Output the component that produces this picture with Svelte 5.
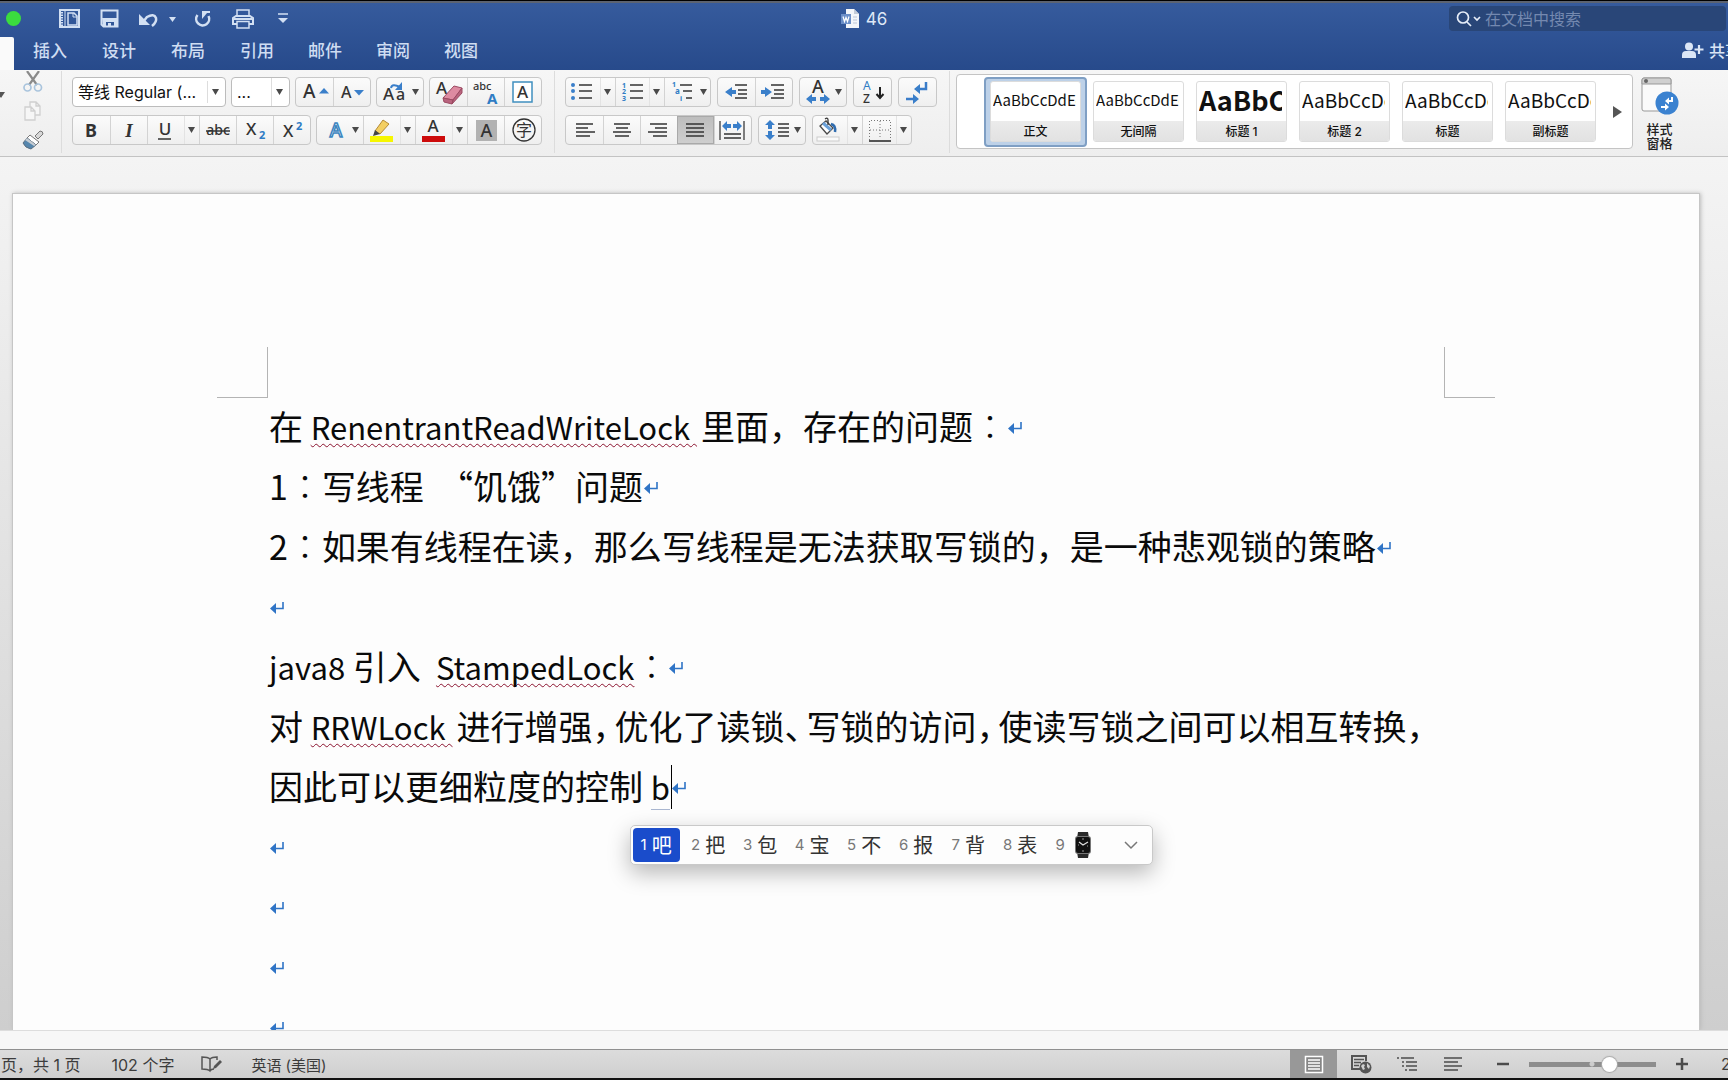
<script>
  const tabs = ['插入', '设计', '布局', '引用', '邮件', '审阅', '视图'];

  const fontRow2 = [
    [
      { icon: 'bold', label: '加粗' },
      { icon: 'italic', label: '倾斜' },
      { icon: 'underline', label: '下划线', split: true },
      { icon: 'strike', label: '删除线' },
      { icon: 'sub', label: '下标' },
      { icon: 'sup', label: '上标' }
    ],
    [
      { icon: 'effect', label: '文本效果', wide: true },
      { icon: 'highlight', label: '突出显示', split: true },
      { icon: 'color', label: '字体颜色', split: true },
      { icon: 'shade', label: '字符底纹' },
      { icon: 'circled', label: '带圈字符' }
    ]
  ];
  const fontRow1 = [
    [
      { icon: 'grow', label: '增大字号' },
      { icon: 'shrink', label: '减小字号' }
    ],
    [{ icon: 'case', label: '更改大小写', wide: true }],
    [
      { icon: 'clear', label: '清除格式' },
      { icon: 'phonetic', label: '拼音指南' },
      { icon: 'charborder', label: '字符边框' }
    ]
  ];
  const paraRow1 = [
    [
      { icon: 'bullets', label: '项目符号', split: true, narrow: true },
      { icon: 'numbers', label: '编号', split: true, narrow: true },
      { icon: 'multilevel', label: '多级列表', wide: true }
    ],
    [
      { icon: 'outdent', label: '减少缩进量' },
      { icon: 'indent', label: '增加缩进量' }
    ],
    [{ icon: 'asian', label: '中文版式', wide: true }],
    [{ icon: 'sort', label: '排序' }],
    [{ icon: 'marks', label: '显示编辑标记' }]
  ];
  const paraRow2 = [
    [
      { icon: 'left', label: '左对齐' },
      { icon: 'center', label: '居中' },
      { icon: 'right', label: '右对齐' },
      { icon: 'justify', label: '两端对齐', on: true },
      { icon: 'distribute', label: '分散对齐' }
    ],
    [{ icon: 'spacing', label: '行距', wide: true }],
    [
      { icon: 'fill', label: '底纹', split: true, narrow: true },
      { icon: 'borders', label: '边框', split: true, narrow: true }
    ]
  ];

  const styles = [
    { name: '正文', sample: 'AaBbCcDdEe', kind: 'small', on: true },
    { name: '无间隔', sample: 'AaBbCcDdEe', kind: 'small' },
    { name: '标题 1', sample: 'AaBbC', kind: 'heavy' },
    { name: '标题 2', sample: 'AaBbCcDc', kind: 'large' },
    { name: '标题', sample: 'AaBbCcDc', kind: 'large' },
    { name: '副标题', sample: 'AaBbCcDc', kind: 'large' }
  ];

  const candidates = ['吧', '把', '包', '宝', '不', '报', '背', '表'];
  const aligned = {
    left: [[10, 27], [10, 22], [10, 29], [10, 24]],
    center: [[11, 27], [13, 25], [10, 28], [12, 26]],
    right: [[10, 27], [15, 27], [8, 27], [13, 27]],
    justify: [[9, 27], [9, 27], [9, 27], [9, 27]]
  };
  const rowY = [8, 12, 16, 20];
  let zoom = $state(65);
  let query = $state('');
</script>

{#snippet caret(x, y)}
  <path class="caret" d="M{x - 3} {y - 3}h7l-3.5 6z" />
{/snippet}

{#snippet mark()}
  <svg class="mark" width="14" height="12" viewBox="0 0 14 12" aria-hidden="true">
    <path d="M0 6.5 6 1v11z" fill="#2f74c6" />
    <path d="M5 6.5h8V0" fill="none" stroke="#2f74c6" stroke-width="1.6" />
  </svg>
{/snippet}

{#snippet icon(name, wide, narrow)}
  <svg width={wide ? 46 : narrow ? 34 : 37} height="28" viewBox="0 0 {wide ? 46 : narrow ? 34 : 37} 28" aria-hidden="true">
    {#if name === 'grow'}
      <text x="7" y="20" font-size="19">A</text><path class="blue" d="M23 15.5h10l-5-5.5z" />
    {:else if name === 'shrink'}
      <text x="8" y="20" font-size="16">A</text><path class="blue" d="M21 12h10l-5 5.5z" />
    {:else if name === 'case'}
      <text x="6" y="22" font-size="17">A</text><text x="19" y="22" font-size="16">a</text>
      <path class="bline" d="M14 10q1-5 9 -1" /><path class="blue" d="M25 4v8h-7z" />
      {@render caret(38, 14)}
    {:else if name === 'clear'}
      <text x="6" y="16" font-size="17">A</text>
      <path d="m13 20 11-12 8 2-9 12z" fill="#dd8ba1" stroke="#9b4a62" stroke-width="1" />
      <path d="m13 20 10 2-1 4-8-2zM23 22l9-12v5L22 26z" fill="#b9647e" stroke="#9b4a62" stroke-width="1" />
    {:else if name === 'phonetic'}
      <text x="6" y="12" font-size="11">abc</text><text class="btext" x="20" y="26" font-size="15">A</text>
    {:else if name === 'charborder'}
      <rect x="9" y="4" width="19" height="20" fill="#fff" stroke="#3f8fbf" stroke-width="1.5" />
      <text class="mid" x="18.5" y="20" font-size="17">A</text>
    {:else if name === 'bold'}
      <text class="mid heavy" x="18" y="21" font-size="18">B</text>
    {:else if name === 'italic'}
      <text class="mid serif" x="19" y="21" font-size="19">I</text>
    {:else if name === 'underline'}
      <text class="mid" x="18" y="19" font-size="17">U</text><path class="ink" d="M11 23h13" />
    {:else if name === 'strike'}
      <text class="mid" x="19" y="19" font-size="14">abc</text><path class="ink" d="M7 15h24" />
    {:else if name === 'sub'}
      <text x="10" y="19" font-size="17">X</text><text class="btext" x="23" y="23" font-size="11">2</text>
    {:else if name === 'sup'}
      <text x="10" y="21" font-size="17">X</text><text class="btext" x="23" y="14" font-size="11">2</text>
    {:else if name === 'effect'}
      <text class="mid glow" x="19" y="21" font-size="19">A</text>{@render caret(38, 14)}
    {:else if name === 'highlight'}
      <path d="m20 4 6 4-9 10-5-3z" fill="#f3cf63" stroke="#b48a35" /><path d="m12 14 5 4-7 2z" fill="#444" />
      <rect x="7" y="20" width="23" height="6" fill="#f6f600" />
    {:else if name === 'color'}
      <text class="mid" x="18" y="16" font-size="17">A</text><rect x="7" y="20" width="23" height="6" fill="#cd0b0b" />
    {:else if name === 'shade'}
      <rect x="9" y="4" width="21" height="21" fill="#b2b2b2" /><text class="mid" x="19.5" y="21" font-size="18">A</text>
    {:else if name === 'circled'}
      <circle cx="20" cy="14" r="11" fill="none" stroke="#333" stroke-width="1.3" />
      <text class="mid cjk" x="20" y="20" font-size="16">字</text>
    {:else if name === 'bullets'}
      {#each [7, 13, 20] as y}<circle class="blue" cx="7" cy={y} r="2" /><path class="ink" d="M13 {y}h13" />{/each}
    {:else if name === 'numbers'}
      {#each [7, 13, 20] as y, i}<text class="btext" x="7" y={y + 3} font-size="7">{i + 1}</text><path class="ink" d="M15 {y}h13" />{/each}
    {:else if name === 'multilevel'}
      <text class="btext" x="8" y="9" font-size="7">1</text><text class="btext" x="11" y="16" font-size="8">a</text><text class="btext" x="16" y="23" font-size="7">i</text>
      <path class="ink" d="M16 7h12M19 13h9M22 20h6" />{@render caret(39, 14)}
    {:else if name === 'outdent'}
      <path class="blue" d="m7 14 7-5v3h4v4h-4v3z" /><path class="ink" d="M17 7h12M20 12h9M20 16h9M17 20h12" />
    {:else if name === 'indent'}
      <path class="blue" d="m17 14-7-5v3H6v4h4v3z" /><path class="ink" d="M16 7h13M19 12h10M19 16h10M16 20h13" />
    {:else if name === 'asian'}
      <text class="mid" x="18" y="15" font-size="18">A</text>
      <path class="blue" d="m6 21 6-5v3h4v4h-4v3zM30 21l-6-5v3h-4v4h4v3z" />{@render caret(38, 14)}
    {:else if name === 'sort'}
      <text class="btext light" x="9" y="12" font-size="12">A</text><text x="9" y="25" font-size="12">Z</text>
      <path d="M26 9v10M22.500 16l3.500 4 3.500-4" fill="none" stroke="#222" stroke-width="2" />
    {:else if name === 'marks'}
      <path d="M27 4v7h-7M7 21h7" fill="none" stroke="#3a7cc9" stroke-width="2.500" /><path class="blue" d="m15 11 6-5v10zM20 21l-6-5v10z" />
    {:else if aligned[name]}
      {#each aligned[name] as [a, b], i}<path class="ink" d="M{a} {rowY[i]}H{b}" />{/each}
    {:else if name === 'distribute'}
      <path d="M6 5v19M30 5v19" stroke="#555" stroke-width="1.500" /><path class="ink" d="M10 18h17M10 22h17" />
      <path class="blue" d="m8 10 5-5v3h4v4h-4v3zM28 10l-5-5v3h-4v4h4v3z" />
    {:else if name === 'spacing'}
      <path class="blue" d="m11 4 5 5h-3v4H9V9H6zM11 24l5-5h-3v-4H9v4H6z" /><path class="ink" d="M19 8h11M19 12h11M19 16h11M19 20h11" />
      {@render caret(38, 14)}
    {:else if name === 'fill'}
      <path d="m7 10 6-5 7 7-6 6z" fill="#fff" stroke="#4a4a4a" stroke-width="1.300" /><path d="m10 7 8 7" stroke="#6aa0d8" stroke-width="3" />
      <path d="M15 9V4q0-3-3-1" fill="none" stroke="#333" stroke-width="1.300" /><path d="M18 8q5 1 4 8" fill="none" stroke="#2f6cb0" stroke-width="2.500" />
      <rect x="4" y="21" width="22" height="4" fill="#fafafa" stroke="#ccc" />
    {:else if name === 'borders'}
      <path d="M7.500 24V4.500h21V24M18 5v18M8 14h20" fill="none" stroke="#777" stroke-width="1" stroke-dasharray="1 2" /><path d="M7 25h22" stroke="#222" stroke-width="1.500" />
    {/if}
  </svg>
{/snippet}

{#snippet row(groups)}
  {#each groups as group}
    <div class="group">
      {#each group as b}
        <button class="tool" class:on={b.on} aria-label={b.label}>{@render icon(b.icon, b.wide, b.narrow)}</button>
        {#if b.split}
          <button class="drop" aria-label="{b.label}选项">
            <svg width="15" height="28" viewBox="0 0 15 28" aria-hidden="true">{@render caret(7, 14)}</svg>
          </button>
        {/if}
      {/each}
    </div>
  {/each}
{/snippet}

<div class="app">
  <header>
    <div class="titlebar">
      <div class="quick">
        <button class="green" aria-label="缩放窗口"></button>
        <button class="q first" aria-label="边栏">
          <svg width="21" height="19" viewBox="0 0 21 19"><path d="M1 1h19v17H1z" fill="none" stroke="#d3e0f3" stroke-width="2" /><path d="M3 3v14" stroke="#d3e0f3" stroke-width="2" stroke-dasharray="1.500 1" /><path d="M6 1v17" stroke="#d3e0f3" stroke-width="1" /><path d="M9 4h6l3 3v9H9z" fill="none" stroke="#d3e0f3" stroke-width="1.500" /><path d="M14 4v4h4" fill="none" stroke="#d3e0f3" /></svg>
        </button>
        <button class="q save" aria-label="保存">
          <svg width="19" height="19" viewBox="0 0 19 19"><path d="M1.500 1.500h16v16h-14l-2-2z" fill="none" stroke="#d3e0f3" stroke-width="2" /><path d="M2 9h15v9h-3v-5H6v5H3z" fill="#d3e0f3" /><path d="M8 14h3v4H8z" fill="#d3e0f3" /></svg>
        </button>
        <button class="q undo" aria-label="撤销">
          <svg width="38" height="18" viewBox="0 0 38 18"><path d="M5 12 9 7q7-4 9 1 1 4-4 8" fill="none" stroke="#d3e0f3" stroke-width="2.500" /><path d="M1 4v11h11z" fill="#d3e0f3" /><path d="M31 7h7l-3.500 5z" fill="#d3e0f3" /></svg>
        </button>
        <button class="q redo" aria-label="重做">
          <svg width="18" height="18" viewBox="0 0 18 18"><path d="M3.500 5a6.500 6.500 0 1 0 11 1" fill="none" stroke="#d3e0f3" stroke-width="2.500" /><path d="M8 1h8v2h-3l-5 6z" fill="#d3e0f3" /></svg>
        </button>
        <button class="q print" aria-label="打印">
          <svg width="22" height="20" viewBox="0 0 22 20"><path d="M5 7V1h12v6" fill="none" stroke="#d3e0f3" stroke-width="1.500" /><path d="M5 15H1V9l3-2h14l3 2v6h-4" fill="none" stroke="#d3e0f3" stroke-width="2" /><path d="M2 9h18v2H2z" fill="#d3e0f3" /><path d="M5 12.500h12V19H5z" fill="none" stroke="#d3e0f3" stroke-width="1.500" /></svg>
        </button>
        <button class="q custom" aria-label="自定义">
          <svg width="10" height="11" viewBox="0 0 10 11"><path d="M0 1h10" stroke="#d3e0f3" stroke-width="1.500" /><path d="M0 5h10l-5 5z" fill="#d3e0f3" /></svg>
        </button>
      </div>
      <div class="title">
        <svg width="18" height="19" viewBox="0 0 18 19" aria-hidden="true"><path d="M5 0h8l5 5v14H5z" fill="#f4f6fa" /><path d="M13 0v5h5" fill="#c3cbd8" /><path d="M12 8h4M12 11h4M12 14h4" stroke="#bcc6d8" /><path d="M0 5h10v10H0z" fill="#6c8fc8" /><path d="m2 7.500 1.500 5L5 8.500l1.500 4 1.500-5" fill="none" stroke="#fff" stroke-width="1.200" /></svg>
        <span>46</span>
      </div>
      <label class="search">
        <svg width="26" height="18" viewBox="0 0 26 18" aria-hidden="true"><circle cx="7" cy="7.500" r="5.500" fill="none" stroke="#e6edf8" stroke-width="1.700" /><path d="m11 12 4 4M18 7l3 3 3-3" fill="none" stroke="#e6edf8" stroke-width="1.700" /></svg>
        <input type="text" placeholder="在文档中搜索" aria-label="在文档中搜索" bind:value={query} />
      </label>
    </div>
    <nav>
      <span class="active"></span>
      {#each tabs as t}<button class="tab">{t}</button>{/each}
      <button class="share">
        <svg width="22" height="17" viewBox="0 0 22 17" aria-hidden="true"><circle cx="7" cy="4.500" r="4" fill="#dbe6f6" /><path d="M0 16V13q0-4 4-4h6q4 0 4 4v3z" fill="#dbe6f6" /><path d="M17 3v9M12.500 7.500h9" stroke="#dbe6f6" stroke-width="2.200" /></svg>
        <span>共享</span>
      </button>
    </nav>
  </header>

  <section class="ribbon" aria-label="功能区">
    <div class="clip">
      <button class="paste" aria-label="粘贴选项"><svg width="5" height="8" viewBox="0 0 5 8"><path d="M-3 1h8L1 7z" fill="#555" /></svg></button>
      <div class="clipcol">
        <button aria-label="剪切"><svg width="20" height="21" viewBox="0 0 20 21"><path d="m4 0 10 14M16 0 6 14" stroke="#8a8a8a" stroke-width="2.200" /><circle cx="4.500" cy="16.500" r="3.500" fill="none" stroke="#a9c4dd" stroke-width="1.700" /><circle cx="15" cy="16.500" r="3.500" fill="none" stroke="#a9c4dd" stroke-width="1.700" /></svg></button>
        <button aria-label="复制"><svg width="20" height="20" viewBox="0 0 20 20"><path d="M7 1h6l4 4v9H7zM13 1v4h4" fill="#f6f6f6" stroke="#cfcfcf" stroke-width="1.300" /><path d="M2 6h6l4 4v9H2zM8 6v4h4" fill="#f6f6f6" stroke="#cfcfcf" stroke-width="1.300" /></svg></button>
        <button aria-label="格式刷"><svg width="22" height="20" viewBox="0 0 22 20"><path d="m13 6 5-5q3 0 3 3l-5 5z" fill="#d8d8d8" stroke="#777" /><path d="m8 5 9 7-3 3-9-7z" fill="#fff" stroke="#777" /><path d="m5 8 9 7-5 4q-6-1-8-6z" fill="#5686ad" stroke="#5c6f80" /><path d="m5 8 9 7-2 1-9-6z" fill="#c6ccd2" /></svg></button>
      </div>
    </div>
    <div class="rows">
      <div class="row">
        <label class="pick font">
          <select aria-label="字体"><option>等线 Regular (...</option></select>
          <svg width="18" height="28" viewBox="0 0 18 28" aria-hidden="true"><path d="M.5 3v22" stroke="#ddd" />{@render caret(8, 14)}</svg>
        </label>
        <label class="pick size">
          <select aria-label="字号"><option>...</option></select>
          <svg width="18" height="28" viewBox="0 0 18 28" aria-hidden="true"><path d="M.5 0v28" stroke="#ddd" />{@render caret(8, 14)}</svg>
        </label>
        {@render row(fontRow1)}
      </div>
      <div class="row">{@render row(fontRow2)}</div>
    </div>
    <div class="rows para">
      <div class="row">{@render row(paraRow1)}</div>
      <div class="row">{@render row(paraRow2)}</div>
    </div>
    <div class="stylebox">
      <div class="gallery">
        {#each styles as s}
          <button class="style" class:chosen={s.on}>
            <span class="card">
              <span class="sample {s.kind}">{s.sample}</span>
              <span class="name">{s.name}</span>
            </span>
          </button>
        {/each}
        <button class="more" aria-label="更多样式"><svg width="9" height="12" viewBox="0 0 9 12"><path d="M0 0l9 6-9 6z" fill="#555" /></svg></button>
      </div>
      <button class="pane">
        <svg width="38" height="38" viewBox="0 0 38 38" aria-hidden="true"><rect x="1" y="1" width="29" height="33" rx="2" fill="#fafafa" stroke="#999" /><path d="M1 7V3q0-2 2-2h25q2 0 2 2v4z" fill="#d0d0d0" stroke="#999" /><circle cx="5" cy="4" r="2" fill="#666" /><circle cx="26" cy="26" r="11.500" fill="#3b82d0" /><path d="M31 20v4h-4M20 30h4" fill="none" stroke="#fff" stroke-width="2" /><path d="m24 24 4-3.500v7zM28 30l-4-3.500v7z" fill="#fff" /></svg>
        <span>样式<br />窗格</span>
      </button>
    </div>
  </section>

  <main>
    <article class="page">
      <div class="corners"><span class="corner l"></span><span class="corner r"></span></div>
      <div class="text">
        <p>在 <u class="gap">RenentrantReadWriteLock&nbsp;</u>里面，存在的问题<i>：</i>{@render mark()}</p>
        <p>1<i>：</i>写线程&nbsp; “饥饿”问题{@render mark()}</p>
        <p>2<i>：</i>如果有线程在读，那么写线程是无法获取写锁的，是一种悲观锁的策略{@render mark()}</p>
        <p>{@render mark()}</p>
        <p><span class="latin">java8</span> 引入&nbsp; <u>StampedLock</u><i>：</i>{@render mark()}</p>
        <p>对 <u class="gap">RRWLock&nbsp;</u>进行增强<b>，</b>优化了读锁<b>、</b>写锁的访问<b>，</b>使读写锁之间可以相互转换<b>，</b></p>
        <p>
          因此可以更细粒度的控制
          <span class="typing"><span class="comp">b</span><span class="cursor"></span>
            <span class="ime" role="listbox" aria-label="候选字">
              {#each candidates as c, i}
                <button class="cand" class:sel={i === 0} role="option" aria-selected={i === 0}><small>{i + 1}</small>{c}</button>
              {/each}
              <button class="cand emoji" role="option" aria-selected="false" aria-label="9 手表"><small>9</small>
                <svg width="18" height="26" viewBox="0 0 18 26"><path d="M4 0h10l1 6H3zM3 20h12l-1 6H4z" fill="#2a2a2a" /><rect x="1" y="4" width="16" height="18" rx="3" fill="#777" /><rect x="2" y="5" width="14" height="16" rx="2" fill="#111" /><path d="m5 10 4 3 5-3" fill="none" stroke="#ddd" stroke-width="1.300" /><path d="M9 6v2M9 18v2M4 13h1M13 14h1" stroke="#999" /></svg>
              </button>
              <button class="expand" aria-label="更多候选"><svg width="14" height="9" viewBox="0 0 14 9"><path d="m1 1 6 6 6-6" fill="none" stroke="#777" stroke-width="1.500" /></svg></button>
            </span>
          </span>{@render mark()}
        </p>
        <p>{@render mark()}</p>
        <p>{@render mark()}</p>
        <p>{@render mark()}</p>
        <p>{@render mark()}</p>
      </div>
    </article>
  </main>
  <div class="scroll"></div>

  <footer>
    <span class="pages">页，共 1 页</span>
    <span class="words">102 个字</span>
    <button class="proof" aria-label="校对"><svg width="22" height="18" viewBox="0 0 22 18"><path d="M9 16V4Q7 2 1 2v12q6 0 8 2 1-2 4-2M9 4q2-2 7-2v3" fill="none" stroke="#555" stroke-width="1.500" /><path d="m12 14 1-3 6-6 2 2-6 6z" fill="#555" /></svg></button>
    <button class="lang">英语 (美国)</button>
    <div class="views">
      <button class="view on" aria-label="页面视图"><svg width="20" height="19" viewBox="0 0 20 19"><rect x="1.500" y="1.500" width="17" height="16" fill="#858585" stroke="#fff" stroke-width="1.500" /><path d="M4 5h12M4 8h12M4 11h12M4 14h12" stroke="#fff" stroke-width="1.300" /></svg></button>
      <button class="view" aria-label="Web 版式"><svg width="22" height="20" viewBox="0 0 22 20"><path d="M10 15H2V2h14v5" fill="none" stroke="#555" stroke-width="2" /><path d="M4 5.500h10M4 8.500h7M4 11.500h5" stroke="#555" stroke-width="1.300" /><circle cx="15.500" cy="13.500" r="6" fill="#555" /><path d="m11 12 2-2 2 1-1 2 1 2-2 1zM17 9l3 3-1 3-2-2z" fill="#d0d0d0" /></svg></button>
      <button class="view" aria-label="大纲"><svg width="21" height="16" viewBox="0 0 21 16"><path d="M0 2h2M4 2h13M5 6h2M9 6h11M5 10h2M9 10h11M8 14h2M12 14h8" stroke="#4c4c4c" stroke-width="1.500" /></svg></button>
      <button class="view draft" aria-label="草稿"><svg width="20" height="16" viewBox="0 0 20 16"><path d="M1 2h18M1 6h14M1 10h18M1 14h14" stroke="#4c4c4c" stroke-width="1.500" /></svg></button>
    </div>
    <button class="step" aria-label="缩小"><svg width="12" height="12" viewBox="0 0 12 12"><path d="M0 6h12" stroke="#4c4c4c" stroke-width="2.500" /></svg></button>
    <input type="range" min="0" max="100" bind:value={zoom} aria-label="缩放" />
    <button class="step" aria-label="放大"><svg width="12" height="12" viewBox="0 0 12 12"><path d="M0 6h12M6 0v12" stroke="#4c4c4c" stroke-width="2.500" /></svg></button>
    <span class="percent">200%</span>
  </footer>
</div>

<style>
  :global(body) { margin: 0; overflow: hidden; }
  .app {
    display: flex; flex-direction: column; height: 100vh; box-sizing: border-box;
    border-top: 1px solid #000; border-bottom: 2px solid #111; overflow: hidden;
    font-family: Inter, "Noto Sans CJK SC", sans-serif; font-size: 15px; color: #333;
  }
  button { padding: 0; border: 0; background: none; font: inherit; color: inherit; display: flex; align-items: center; justify-content: center; flex: none; }
  svg { display: block; flex: none; }
  header { border-top: 2px solid #5c6370; background: linear-gradient(#365b9d, #274a8b); flex: none; }
  .titlebar { display: grid; grid-template-columns: 1fr auto 1fr; align-items: center; height: 31px; padding-bottom: 3px; }
  .quick { display: flex; align-items: center; }
  .green { width: 15px; height: 15px; border-radius: 50%; background: #3bdc3e; margin-left: 6px; }
  .first { margin-left: 38px; }
  .save { margin-left: 20px; }
  .undo { margin-left: 19px; }
  .redo { margin-left: 18px; }
  .print { margin-left: 20px; }
  .custom { margin-left: 24px; }
  .title { display: flex; align-items: center; gap: 7px; font-size: 17px; color: #dfe8f6; }
  .search { justify-self: end; display: flex; align-items: center; box-sizing: border-box; width: 277px; height: 25px; margin-right: 2px; padding-left: 7px; gap: 3px; border-radius: 4px; background: #294678; }
  .search input { flex: 1; min-width: 0; border: 0; outline: 0; background: none; font: inherit; font-size: 16px; color: #fff; padding: 0; }
  .search input::placeholder { color: #7489b0; }
  nav { display: flex; height: 33px; overflow: hidden; }
  .active { width: 14px; background: #fafafa; border-radius: 0 2px 0 0; margin-right: 2px; flex: none; }
  .tab { height: 28px; padding: 0 17px; font-size: 17px; font-weight: 500; color: #cfddf2; margin-right: 1px; line-height: 28px; }
  .tab:nth-child(n + 5) { margin-right: 0; }
  .share { height: 26px; gap: 5px; margin: 0 -13px 0 auto; font-size: 16px; font-weight: 500; color: #dbe6f6; }

  .ribbon { display: flex; flex: none; box-sizing: border-box; height: 87px; padding: 1px 0 3px; background: linear-gradient(#f6f6f6, #eeeeee); border-bottom: 1px solid #c3c3c3; overflow: hidden; }
  .clip { display: flex; align-items: flex-start; width: 61px; flex: none; }
  .paste { margin-top: 20px; }
  .clipcol { display: flex; flex-direction: column; gap: 9px; margin-left: 17px; }
  .rows { display: flex; flex-direction: column; gap: 8px; padding: 6px 12px 0 10px; border-left: 1px solid #dcdcdc; flex: none; }
  .row { display: flex; gap: 5px; }
  .para .row { gap: 6px; }
  .group { display: flex; height: 28px; border: 1px solid #c8c8c8; border-radius: 4px; background: linear-gradient(#fbfbfb, #efefef); overflow: hidden; }
  .tool + .tool, .drop + .tool { box-shadow: inset 1px 0 #d3d3d3; }
  .drop { box-shadow: inset 1px 0 #e3e3e3; }
  .tool.on { background: linear-gradient(#bdbdbd, #cfcfcf); box-shadow: inset 0 0 0 1px #a9a9a9; }
  .pick { display: grid; box-sizing: border-box; height: 30px; border: 1px solid #bcbcbc; border-radius: 4px; background: #fff; }
  .pick > * { grid-area: 1 / 1; }
  .pick svg { justify-self: end; pointer-events: none; }
  .pick select { appearance: none; border: 0; outline: 0; background: none; font: inherit; font-size: 16px; color: #111; padding: 0 18px 0 5px; width: 100%; height: 28px; }
  .font { width: 154px; }
  .size { width: 59px; }
  .caret { fill: #4a4a4a; }
  .blue { fill: #3a7fca; }
  .bline { fill: none; stroke: #3a7fca; stroke-width: 2; }
  .ink { fill: none; stroke: #333; stroke-width: 1.5; }
  text { font-family: "Noto Sans", sans-serif; font-weight: 500; fill: #333; }
  .btext { fill: #2f7cc4; font-weight: 700; }
  .light { font-weight: 400; }
  .mid { text-anchor: middle; }
  .heavy { font-weight: 700; }
  text.serif { font-family: "Liberation Serif", serif; font-style: italic; font-weight: 700; }
  text.cjk { font-family: "Noto Sans CJK SC", sans-serif; font-weight: 400; }
  .glow { fill: #fff; stroke: #3c85bf; stroke-width: 1.5; }

  .stylebox { display: flex; flex: 1; min-width: 0; border-left: 1px solid #dcdcdc; padding: 3px 0 0 6px; }
  .gallery { display: flex; align-items: center; box-sizing: border-box; height: 75px; padding-left: 27px; border: 1px solid #c4c4c4; border-radius: 4px; background: #fff; }
  .style { box-sizing: border-box; width: 103px; height: 70px; }
  .chosen { background: #bdd1e8; border: 2px solid #7f9fc4; border-radius: 4px; }
  .card { display: flex; flex-direction: column; box-sizing: border-box; width: 91px; height: 61px; border: 1px solid #dcdcdc; border-radius: 3px; overflow: hidden; background: #fff; color: #111; }
  .sample { flex: 1; display: flex; align-items: center; margin: 0 4px 0 2px; padding-bottom: 3px; overflow: hidden; white-space: nowrap; font-family: "Noto Sans CJK SC", sans-serif; font-size: 15px; line-height: 30px; }
  .sample.large { font-size: 19px; }
  .sample.heavy { font-size: 27px; font-weight: 700; }
  .name { height: 20px; line-height: 21px; background: linear-gradient(#ebebeb, #e2e2e2); font-size: 12px; font-weight: 500; text-align: center; }
  .more { width: 30px; }
  .pane { flex-direction: column; justify-content: flex-start; width: 53px; padding-top: 3px; gap: 7px; font-size: 13px; line-height: 14px; font-weight: 500; color: #222; }

  main { flex: 1; min-height: 0; display: flex; padding: 36px 28px 0 12px; background: linear-gradient(#f4f4f4, #e8e8e8 30%, #cecece); overflow: hidden; }
  .page { flex: 1; min-width: 0; border: 1px solid #c6c6c6; border-bottom: 0; background: #fdfdfd; box-shadow: 1px 0 4px #bbb; overflow: hidden; }
  .corners { display: flex; justify-content: space-between; padding: 153px 204px 0; }
  .corner { width: 50px; height: 50px; border-bottom: 1px solid #b4b4b4; }
  .l { border-right: 1px solid #b4b4b4; }
  .r { border-left: 1px solid #b4b4b4; }
  .text { margin-top: -2px; padding: 0 256px; font-family: "Noto Sans CJK SC", sans-serif; font-size: 34px; line-height: 60px; color: #0a0a0a; }
  p { margin: 0; height: 60px; white-space: nowrap; }
  u { font-size: 31px; text-decoration: underline wavy #8c1430 1px; text-underline-offset: 3px; text-decoration-skip-ink: none; }
  .gap { margin-right: 4px; }
  .latin, .comp { font-size: 31px; }
  i { font-style: normal; font-weight: 300; font-family: "Noto Sans CJK TC", sans-serif; }
  b { font-weight: 400; font-feature-settings: "halt"; margin-right: 5px; }
  .mark { display: inline-block; vertical-align: 6px; margin-left: 1px; }
  .typing { position: relative; display: inline-block; height: 60px; vertical-align: top; }
  .comp { border-bottom: 1px solid #a9b6d0; }
  .cursor { display: inline-block; width: 1px; height: 44px; margin-left: 1px; background: #000; vertical-align: -9px; }
  .typing + :global(svg) { margin-left: 0; }
  .ime { position: absolute; left: -21px; top: 69px; display: flex; align-items: center; box-sizing: border-box; width: 523px; height: 40px; padding-left: 2px; border: 1px solid #c9c9c9; border-radius: 5px; background: #fdfdfd; box-shadow: 0 8px 22px rgba(0, 0, 0, 0.28); font-size: 20px; line-height: 32px; color: #333; }
  .cand { width: 47px; height: 34px; gap: 5px; margin-right: 5px; border-radius: 4px; font-weight: 400; }
  .cand small { font-family: Inter, sans-serif; font-size: 15px; line-height: 34px; color: #777; }
  .emoji { gap: 9px; width: 50px; }
  .cand.sel { background: #1a4ccb; color: #fff; }
  .sel small { color: #fff; }
  .expand { width: 26px; margin-left: 14px; }

  .scroll { flex: none; height: 18px; background: #f7f7f7; border-top: 1px solid #ddd; border-bottom: 1px solid #8f8f8f; }
  footer { flex: none; display: flex; align-items: center; height: 28px; background: linear-gradient(#dcdcdc, #cfcfcf); color: #3c3c3c; font-size: 16px; white-space: nowrap; overflow: hidden; }
  .pages { margin-left: 1px; }
  .words { margin-left: 31px; }
  .proof { margin-left: 27px; }
  .lang { margin-left: 28px; font-size: 15px; }
  .views { display: flex; margin-left: auto; }
  .view { width: 47px; height: 28px; }
  .view.on { background: #989898; }
  .view.draft { width: 43px; }
  .step { margin-left: 20px; }
  .views + .step { margin-left: 23px; }
  input[type="range"] { appearance: none; width: 127px; height: 16px; margin: 0 0 0 20px; background: radial-gradient(circle at 63px 8px, #ccc 2px, transparent 3px), linear-gradient(#8d8d8d, #8d8d8d) center / 100% 5px no-repeat; border-radius: 3px; }
  input[type="range"]::-webkit-slider-thumb { appearance: none; width: 15px; height: 15px; border-radius: 50%; background: #fff; box-shadow: 0 0 1px 1px #aaa; }
  .percent { width: 7px; margin-left: 33px; overflow: hidden; }
</style>
